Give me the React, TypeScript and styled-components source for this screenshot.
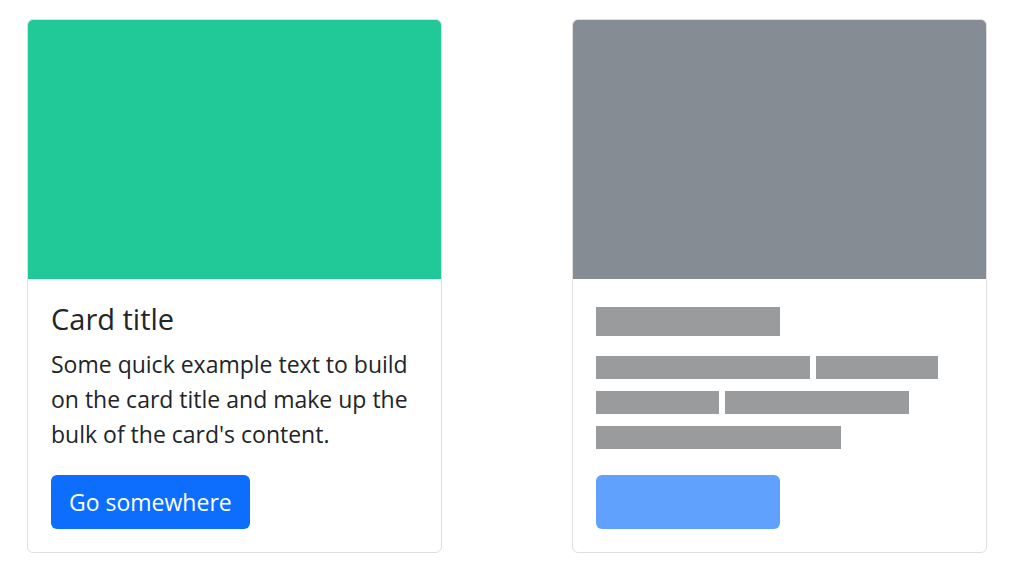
import React from "react";
import styled, { createGlobalStyle } from "styled-components";

const GlobalStyle = createGlobalStyle`
  * { box-sizing: border-box; }
  body {
    margin: 0;
    background: #fff;
    font-family: "Open Sans", "Noto Sans", sans-serif;
    color: #212529;
  }
`;

const Page = styled.div`
  display: flex;
  gap: 130px;
  padding: 19px 0 0 27px;
`;

const Card = styled.div`
  width: 415px;
  display: flex;
  flex-direction: column;
  border: 1px solid #dfdfdf;
  border-radius: 6px;
  overflow: hidden;
  background: #fff;
`;

const CardImage = styled.div<{ $color: string }>`
  height: 259px;
  background: ${(p) => p.$color};
`;

const CardBody = styled.div`
  padding: 22px 23px 23px;
  display: flex;
  flex-direction: column;
  align-items: flex-start;
`;

const Title = styled.h5`
  margin: 0 0 11px;
  font-size: 29px;
  line-height: 35px;
  font-weight: 400;
  color: #212529;
`;

const Text = styled.p`
  margin: 0 0 23px;
  font-size: 23px;
  line-height: 35px;
  color: #212529;
`;

const Button = styled.a`
  display: inline-flex;
  align-items: center;
  height: 54px;
  padding: 0 18px;
  background: #0d6efd;
  color: #fff;
  border-radius: 6px;
  font-size: 23px;
  text-decoration: none;
`;

const PlaceholderTitle = styled.div`
  width: 184px;
  height: 29px;
  margin-top: 6px;
  background: #9a9b9d;
`;

const PlaceholderLines = styled.div`
  display: flex;
  flex-wrap: wrap;
  column-gap: 6px;
  row-gap: 11.5px;
  width: 100%;
  margin: 20px 0 26px;
`;

const Bar = styled.span<{ $w: number }>`
  display: block;
  height: 23.3px;
  width: ${(p) => p.$w}px;
  background: #9a9b9d;
`;

const PlaceholderButton = styled.div`
  width: 184px;
  height: 54px;
  border-radius: 6px;
  background: #61a1fe;
`;

const bars = [214, 122, 123, 184, 245];

export default function App() {
  return (
    <>
      <GlobalStyle />
      <Page>
        <Card>
          <CardImage $color="#20c997" />
          <CardBody>
            <Title>Card title</Title>
            <Text>
              Some quick example text to build on the card title and make up
              the bulk of the card's content.
            </Text>
            <Button href="#">Go somewhere</Button>
          </CardBody>
        </Card>
        <Card>
          <CardImage $color="#868c94" />
          <CardBody>
            <PlaceholderTitle />
            <PlaceholderLines>
              {bars.map((w, i) => (
                <Bar key={i} $w={w} />
              ))}
            </PlaceholderLines>
            <PlaceholderButton />
          </CardBody>
        </Card>
      </Page>
    </>
  );
}
